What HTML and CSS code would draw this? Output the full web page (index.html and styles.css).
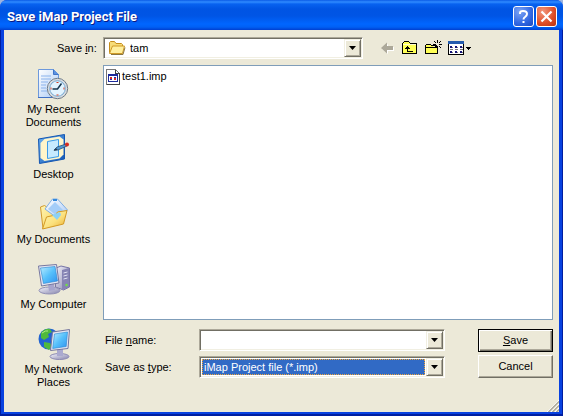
FILE: index.html
```html
<!DOCTYPE html>
<html lang="en">
<head>
<meta charset="utf-8">
<title>Save iMap Project File</title>
<link rel="stylesheet" href="styles.css">
</head>
<body>
<main class="window">
  <header class="titlebar">
    <h1>Save iMap Project File</h1>
    <button class="caption help" type="button" aria-label="Help">
      <svg width="19" height="19" viewBox="0 0 19 19" fill="none" stroke="#fff" stroke-width="2"><path d="M6 7V6Q6 4 9 4Q13 4 13 7Q13 8.500 11 10Q9.500 11 9.500 12.500M9.500 14v2"/></svg>
    </button>
    <button class="caption close" type="button" aria-label="Close">
      <svg width="19" height="19" viewBox="0 0 19 19" fill="none" stroke="#fff" stroke-width="2.200"><path d="M4.500 4.500l10 10M14.500 4.500l-10 10"/></svg>
    </button>
  </header>
  <form class="dialog">
    <nav class="places">
      <a href="#recent">
        <svg width="32" height="32" viewBox="0 0 32 32">
          <defs>
            <linearGradient id="page" x2="1" y2="1"><stop stop-color="#fff"/><stop offset="1" stop-color="#a9c9f5"/></linearGradient>
            <linearGradient id="screen" x2="1" y2="1"><stop stop-color="#b9edff"/><stop offset=".5" stop-color="#56c0fb"/><stop offset="1" stop-color="#2f91ee"/></linearGradient>
            <linearGradient id="gold" x2="1" y2="1"><stop stop-color="#fff6b5"/><stop offset=".55" stop-color="#fbe17d"/><stop offset="1" stop-color="#e9a92c"/></linearGradient>
            <linearGradient id="metal" x2="1" y2="1"><stop stop-color="#f4f4fb"/><stop offset="1" stop-color="#8583ad"/></linearGradient>
            <linearGradient id="blue" x2="1" y2="1"><stop stop-color="#6ab2f5"/><stop offset="1" stop-color="#1254b2"/></linearGradient>
          </defs>
          <path d="M.5 1.500h15l5 5v23H.5z" fill="url(#page)" stroke="#6d99dc"/>
          <path d="M15.500 1.500v5h5" fill="#5d92e0" stroke="#3f75ca"/>
          <path d="M3 8h10M3 11h10M3 14h7M3 17h5M3 20h5M3 23h6" stroke="#8bb3ec"/>
          <path d="M0 29.500h21" stroke="#3f70c4"/>
          <circle cx="19.500" cy="20.500" r="10.200" fill="#d8dce0" stroke="#6f7b87"/>
          <circle cx="19.500" cy="20.500" r="7.800" fill="#e2f4ff" stroke="#75a8d2"/>
          <path d="M19.500 14v1M25.500 20.500h1M12.500 20.500h1M19.500 26.500v1" stroke="#d33d22" stroke-width="2"/>
          <path d="M23.500 15.500l-4 5.500h-5" fill="none" stroke="#17364f" stroke-width="1.500"/>
        </svg>
        <span>My Recent<br>Documents</span>
      </a>
      <a href="#desktop">
        <svg width="32" height="32" viewBox="0 0 32 32">
          <path d="M.5 6l26-4.500v24.500L1.500 30.500z" fill="url(#blue)" stroke="#1557b2" stroke-linejoin="round"/>
          <path d="M2.500 10l4-4 15-2.500 4 3v15l-4 4-15 2.500-4-3z" fill="#fff5ca"/>
          <path d="M9.500 8.500l11-2v17l-11 2z" fill="#c6eaff" stroke="#3b9be9"/>
          <path d="M16 17l3-3 9-3 1 2-9 4z" fill="#5497cd" stroke="#234f7a" stroke-width=".8"/>
          <path d="M15.500 18l4-1-1.500-2z" fill="#243a50"/>
          <circle cx="29" cy="11.500" r="2" fill="#d82c1e"/>
        </svg>
        <span>Desktop</span>
      </a>
      <a href="#documents">
        <svg width="32" height="32" viewBox="0 0 32 32">
          <path d="M2.500 9l4-1.500 3 2 9-2 2 17-15.500 6z" fill="url(#gold)" stroke="#d19a2e"/>
          <path d="M7 11L14.500 1h5l10 11-9 9z" fill="url(#page)" stroke="#7faee5"/>
          <path d="M10 11l7-7 8 8-6 6z" fill="#a4cdf8"/>
          <path d="M15 2h4" stroke="#3489dd" stroke-width="2"/>
          <path d="M4.500 31l4-12 9-2 2-3 9.500-1.500-3.500 13.500z" fill="url(#gold)" stroke="#d39a24" stroke-linejoin="round"/>
          <path d="M14 17l8-3 1 3-4 5z" fill="#8bd1f6"/>
        </svg>
        <span>My Documents</span>
      </a>
      <a href="#computer">
        <svg width="32" height="32" viewBox="0 0 32 32">
          <path d="M18 5l5-2 8.500 2v19l-6 3-8-3z" fill="url(#metal)" stroke="#7775a6"/>
          <path d="M24 7l7-2v19l-7 3z" fill="#8684b4"/>
          <path d="M25.500 10l4-1M25.500 13l4-1M25.500 16l4-1" stroke="#e0e0f2"/>
          <circle cx="28.500" cy="22" r="1.200" fill="#6fe53e"/>
          <ellipse cx="11.500" cy="27.500" rx="10.500" ry="3.500" fill="url(#metal)" stroke="#9190b5"/>
          <path d="M10 21l6-1 1 7-6 1z" fill="#a6a5cd"/>
          <path d="M.5 3l18-1.500 2.500 18.500-17.500 3z" fill="#e3e5f2" stroke="#7778a0"/>
          <path d="M2.500 5l14.500-1.500L19.500 18l-14 2.500z" fill="url(#screen)" stroke="#2684d0" stroke-width=".6"/>
        </svg>
        <span>My Computer</span>
      </a>
      <a href="#network">
        <svg width="32" height="32" viewBox="0 0 32 32">
          <circle cx="11" cy="11" r="10.500" fill="#2264d1"/>
          <path d="M3 5q4-5 9-4l2 3-4 2 1 3-5 3-3-2zM6 14l6 1 2 3-3 4-5-3z" fill="#4fba3c"/>
          <path d="M4 5q4-3 6-2" fill="none" stroke="#b5ed87"/>
          <ellipse cx="21.500" cy="28.500" rx="9.500" ry="3" fill="url(#metal)" stroke="#8c8ab3"/>
          <path d="M19 21h6v7h-6z" fill="#aaa9cf"/>
          <path d="M14.500 4l17-2.500-1.500 19-17.500 2z" fill="#e5e7f3" stroke="#74759c"/>
          <path d="M16.500 6l13-2-1.300 14.500-13.500 2z" fill="url(#screen)" stroke="#2684d0" stroke-width=".6"/>
        </svg>
        <span>My Network<br>Places</span>
      </a>
    </nav>
    <section class="content">
      <div class="lookin">
        <label for="folder">Save <u>i</u>n:</label>
        <div class="combo">
          <svg width="18" height="16" viewBox="0 0 18 16"><path d="M1.500 12.500v-10l1-1h4l1.500 2h5.500l1 1v8z" fill="#f7dc78" stroke="#c48d1c"/><path d="M1.500 13.500l3-7.500h12l-2 7.500z" fill="#ffef9e" stroke="#cf9a26" stroke-linejoin="round"/><path d="M3 14.500h12l2-7" fill="none" stroke="#8b7740"/></svg>
          <select id="folder"><option>tam</option></select>
          <span class="arrow" aria-hidden="true"><svg width="7" height="4" viewBox="0 0 7 4"><path d="M0 0h7L3.500 4z"/></svg></span>
        </div>
        <div class="tools">
          <button type="button" aria-label="Back" disabled><svg width="16" height="16" viewBox="0 0 16 16"><path d="M4 9l6-5v3h6v4h-6v3z" fill="#fff"/><path d="M3 8l6-5.500V6h6v4H9v3.500z" fill="#aca899"/></svg></button>
          <button type="button" aria-label="Up one level"><svg width="16" height="16" viewBox="0 0 16 16" shape-rendering="crispEdges"><path d="M1.500 13.500v-10l2-2h4l2 2h6v10z" fill="#ffff56" stroke="#000"/><path d="M2 4.500h13" stroke="#fffed0"/><path d="M6.500 6v5.500H12M4 8.500h5M5 7.500h3" stroke="#000" fill="none"/></svg></button>
          <button type="button" aria-label="Create new folder"><svg width="16" height="16" viewBox="0 0 16 16" overflow="visible" shape-rendering="crispEdges"><path d="M1.500 13.500v-8l1-1h4l1 1h6v8z" fill="#ffff56" stroke="#000"/><path d="M2 7.500h11" stroke="#000"/><path d="M9 0h9v7H9z" fill="#ece9d8"/><path d="M9 5.500h3.500v2" fill="none" stroke="#000"/><path d="M13 0h1v3h-1zM13 6h1v3h-1zM9 4h3v1H9zM15 4h3v1h-3zM10 1h1v1h-1zM11 2h1v1h-1zM15 2h1v1h-1zM16 1h1v1h-1zM15 6h1v1h-1zM16 7h1v1h-1zM11 6h1v1h-1z"/></svg></button>
          <button type="button" aria-label="View menu"><svg width="26" height="16" viewBox="0 0 26 16" shape-rendering="crispEdges"><path d="M1.500 1.500h15v13h-15z" fill="#fff" stroke="#000"/><path d="M1 1h16v3H1z" fill="#245bad"/><path d="M3 6h2v2H3zM8 6h2v2H8zM13 6h2v2h-2zM3 11h2v2H3zM8 11h2v2H8zM13 11h2v2h-2z" fill="#151578"/><path d="M5 7h1v1H5zM10 7h1v1h-1zM15 7h1v1h-1zM5 12h1v1H5zM10 12h1v1h-1zM15 12h1v1h-1zM3 9h3v1H3zM8 9h3v1H8zM13 9h3v1h-3z" fill="#777"/><path d="M19 7h5v1h-5zM20 8h3v1h-3zM21 9h1v1h-1z"/></svg></button>
        </div>
      </div>
      <ul class="files">
        <li><svg width="16" height="16" viewBox="0 0 16 16" shape-rendering="crispEdges"><path d="M1.500 .5h9l4 4v11h-13z" fill="#fff" stroke="#777"/><path d="M10.500 1v3.500h4v11h-13" fill="none" stroke="#444"/><path d="M3 5h10v8H3z" fill="#1c2a9b"/><path d="M4 7h8v5H4z" fill="#fff"/><path d="M5 8h2v2H5zM9 9h2v2H9z" fill="#d52a2a"/><path d="M9 8h2v1H9zM5 10h2v1H5z" fill="#2033b0"/></svg><span>test1.imp</span></li>
      </ul>
      <div class="bottom">
        <div class="fields">
          <label for="name">File <u>n</u>ame:</label>
          <div class="combo">
            <input id="name" type="text" autocomplete="off">
            <button class="arrow" type="button" aria-label="Recent names"><svg width="7" height="4" viewBox="0 0 7 4"><path d="M0 0h7L3.500 4z"/></svg></button>
          </div>
          <label for="type">Save as <u>t</u>ype:</label>
          <div class="combo">
            <select id="type" class="focused"><option>iMap Project file (*.imp)</option></select>
            <span class="arrow" aria-hidden="true"><svg width="7" height="4" viewBox="0 0 7 4"><path d="M0 0h7L3.500 4z"/></svg></span>
          </div>
        </div>
        <div class="actions">
          <button class="push default" type="submit"><span><u>S</u>ave</span></button>
          <button class="push" type="button">Cancel</button>
        </div>
      </div>
    </section>
    <svg class="grip" width="12" height="12" viewBox="0 0 12 12"><path d="M0 12L12 0M4 12l8-8M8 12l4-4" stroke="#fff"/><path d="M1.500 12L12 1.500M5.500 12L12 5.500M9.500 12L12 9.500" stroke="#aca899" stroke-width="1.500"/></svg>
  </form>
</main>
</body>
</html>
```
FILE: styles.css
```css
* {
  box-sizing: border-box;
}

body {
  margin: 0;
  background: #9db4e0;
  font: 11px/13px "Liberation Sans", Arial, sans-serif;
  color: #000;
}

button,
input,
select {
  margin: 0;
  padding: 0;
  border: 0;
  border-radius: 0;
  background: none;
  font: inherit;
  color: inherit;
}

svg {
  display: block;
  flex: none;
}

.window {
  position: relative;
  display: flex;
  flex-direction: column;
  min-height: 100vh;
  border-radius: 7px 7px 0 0;
  overflow: hidden;
  background: #0842e0;
}

.window::after {
  content: "";
  position: absolute;
  inset: 30px 0 0;
  border: solid #001ea0;
  border-width: 0 1px 2px;
  pointer-events: none;
}

.titlebar {
  display: flex;
  align-items: center;
  gap: 2px;
  height: 30px;
  padding: 3px 6px 0 7px;
  background: linear-gradient(#0a5be6 0, #2f8bff 2px, #0762f0 4px, #0054e3 9px, #0055e5 16px, #0066ff 24px, #0060f5 27px, #003fd0 30px);
}

.titlebar h1 {
  flex: 1;
  margin: 0;
  font: bold 13px/18px Roboto, "Open Sans", sans-serif;
  color: #fff;
  text-shadow: 1px 1px 0 #0a1883;
}

.caption {
  display: grid;
  place-items: center;
  width: 21px;
  height: 21px;
  border: 1px solid #fff;
  border-radius: 3px;
}

.help {
  background: radial-gradient(circle at 30% 25%, #7ca4f4, #3167e2 60%, #1948c0);
}

.close {
  background: radial-gradient(circle at 30% 25%, #f2977c, #df4c25 60%, #b93210);
}

.dialog {
  position: relative;
  flex: 1;
  display: flex;
  padding: 7px 6px 0 0;
  border: solid #0842e0;
  border-width: 0 4px 4px;
  background: #ece9d8;
}

.places {
  display: flex;
  flex-direction: column;
  width: 99px;
  padding-top: 31px;
}

.places a {
  display: flex;
  flex-direction: column;
  align-items: center;
  gap: 3px;
  height: 65px;
  color: inherit;
  text-align: center;
  text-decoration: none;
}

.places a:last-child {
  height: auto;
}

.content {
  flex: 1;
  display: flex;
  flex-direction: column;
  min-width: 0;
  padding-bottom: 34px;
}

.lookin {
  display: flex;
  align-items: center;
  margin-bottom: 6px;
}

.lookin label {
  width: 46px;
  margin-left: -46px;
}

.combo {
  display: flex;
  align-items: center;
  height: 22px;
  border: 1px solid;
  border-color: #aca899 #fff #fff #aca899;
  box-shadow: inset 1px 1px #716f64, inset -1px -1px #f1efe2;
  padding: 2px 1px;
  background: #fff;
}

.lookin .combo {
  flex: 1;
  padding-left: 4px;
}

.combo select,
.combo input {
  flex: 1;
  min-width: 0;
  height: 16px;
  appearance: none;
  outline: 0;
}

.lookin select {
  padding-left: 4px;
}

.combo .focused {
  margin: 0 1px;
  padding-left: 1px;
  border: 1px dotted #f0a63c;
  background: #316ac5;
  color: #fff;
  line-height: 14px;
}

.arrow {
  display: grid;
  place-items: center;
  width: 17px;
  height: 18px;
  background: #ece9d8;
  border: 1px solid;
  border-color: #f1efe2 #716f64 #716f64 #f1efe2;
  box-shadow: inset 1px 1px #fff, inset -1px -1px #aca899;
}

.tools {
  display: flex;
  gap: 7px;
  width: 190px;
  padding-left: 15px;
}

.files {
  flex: 1;
  margin: 0 0 9px;
  padding: 2px 1px;
  border: 1px solid #7f9db9;
  background: #fff;
  list-style: none;
}

.files li {
  display: flex;
  align-items: center;
  gap: 1px;
  height: 17px;
}

.bottom {
  display: flex;
  justify-content: space-between;
  gap: 33px;
}

.fields {
  flex: 1;
  display: grid;
  grid-template-columns: 94px 1fr;
  align-items: center;
  row-gap: 5px;
  padding-left: 2px;
}

.actions {
  display: flex;
  flex-direction: column;
  gap: 3px;
  width: 75px;
}

.push {
  height: 23px;
  border: 1px solid;
  border-color: #fff #716f64 #716f64 #fff;
  box-shadow: inset -1px -1px #aca899;
  background: #ece9d8;
}

.default {
  border-color: #000;
  box-shadow: inset 1px 1px #fff, inset -1px -1px #716f64, inset -2px -2px #aca899;
}

.grip {
  position: absolute;
  right: 0;
  bottom: 0;
}
```
